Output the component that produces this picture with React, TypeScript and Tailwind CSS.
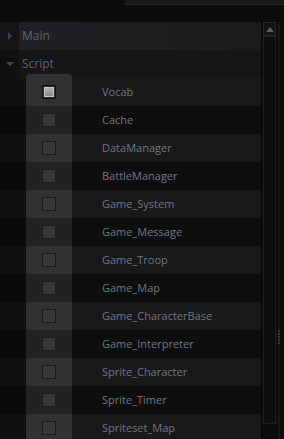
import React from "react";

const items = [
  "Vocab",
  "Cache",
  "DataManager",
  "BattleManager",
  "Game_System",
  "Game_Message",
  "Game_Troop",
  "Game_Map",
  "Game_CharacterBase",
  "Game_Interpreter",
  "Sprite_Character",
  "Sprite_Timer",
  "Spriteset_Map",
];

function Row({ name, i }: { name: string; i: number }) {
  const light = i % 2 === 0;
  const checked = i === 0;
  return (
    <div className={`flex h-[28px] shrink-0 ${light ? "bg-[#191919]" : "bg-[#0e0e0e]"}`}>
      <div className={`w-[26px] ${light ? "bg-[#111111]" : "bg-[#0a0a0a]"} border-r border-[#0a0a0a]`} />
      <div className={`w-[46px] flex items-center justify-center ${light ? "bg-[#313131]" : "bg-[#222222]"}`}>
        {checked ? (
          <div className="w-[14px] h-[14px] border border-[#151515] bg-[#2a2a2a] p-px">
            <div className="w-full h-full border border-[#c8c8c8] bg-gradient-to-b from-[#b0b0b0] to-[#888888]" />
          </div>
        ) : (
          <div className="w-[14px] h-[14px] border border-[#1c1c1c] bg-[#383838]" />
        )}
      </div>
      <div className="flex-1 flex items-center pl-[30px] text-[11px] text-[#6d7884]">{name}</div>
    </div>
  );
}

export default function App() {
  return (
    <div
      className="w-[284px] h-[439px] bg-[#0c0c0c] overflow-hidden flex flex-col"
      style={{ fontFamily: '"Open Sans", "Noto Sans", sans-serif' }}
    >
      <div className="flex h-[5px] shrink-0">
        <div className="w-[125px]" />
        <div className="flex-1 bg-[#1a1a1a] border-b border-[#262626]" />
      </div>
      <div className="h-[17px] shrink-0" />
      <div className="flex flex-1 min-h-0">
        <div className="w-[261px] flex flex-col">
          <div className="flex h-[28px] shrink-0">
            <div className="w-[19px] bg-[#141517] flex items-center justify-center">
              <svg width="6" height="8" viewBox="0 0 6 8"><path d="M1 0 L5 4 L1 8 Z" fill="#3e4145" /></svg>
            </div>
            <div className="flex-1 bg-gradient-to-r from-[#1f2124] to-[#1b1b1b] flex items-center pl-[3px] text-[12px] text-[#5a6570]">
              Main
            </div>
          </div>
          <div className="flex h-[28px] shrink-0">
            <div className="w-[19px] bg-[#101010] flex items-center justify-center">
              <svg width="8" height="5" viewBox="0 0 8 5"><path d="M0 0 L8 0 L4 4 Z" fill="#44474b" /></svg>
            </div>
            <div className="flex-1 bg-[#151515] flex items-end pl-[3px] text-[12px] text-[#5a6570] relative">
              <div className="h-full flex items-center">Script</div>
              <div className="absolute left-[7px] bottom-0 w-[46px] h-[4px] bg-[#313131] rounded-t-[5px]" />
            </div>
          </div>
          {items.map((n, i) => (
            <Row key={n} name={n} i={i} />
          ))}
        </div>
        <div className="w-px bg-[#080808]" />
        <div className="w-[15px] flex flex-col px-px">
          <div className="h-[14px] shrink-0 border border-[#262626] bg-[#131313] flex items-center justify-center">
            <svg width="8" height="5" viewBox="0 0 8 5"><path d="M0 5 L8 5 L4 0 Z" fill="#5c5c5c" /></svg>
          </div>
          <div className="h-[388px] shrink-0 border border-[#1e1e1e] bg-[#0e0e0e]" />
        </div>
        <div className="w-[1px]" />
        <div className="w-[2px] bg-[#171717] relative">
          <div className="absolute left-0 top-[308px] flex flex-col gap-px">
            <div className="w-[2px] h-[2px] bg-[#333]" />
            <div className="w-[2px] h-[2px] bg-[#333]" />
            <div className="w-[2px] h-[2px] bg-[#333]" />
            <div className="w-[2px] h-[2px] bg-[#333]" />
            <div className="w-[2px] h-[2px] bg-[#333]" />
          </div>
        </div>
        <div className="flex-1 bg-[#0c0c0c]" />
      </div>
    </div>
  );
}
